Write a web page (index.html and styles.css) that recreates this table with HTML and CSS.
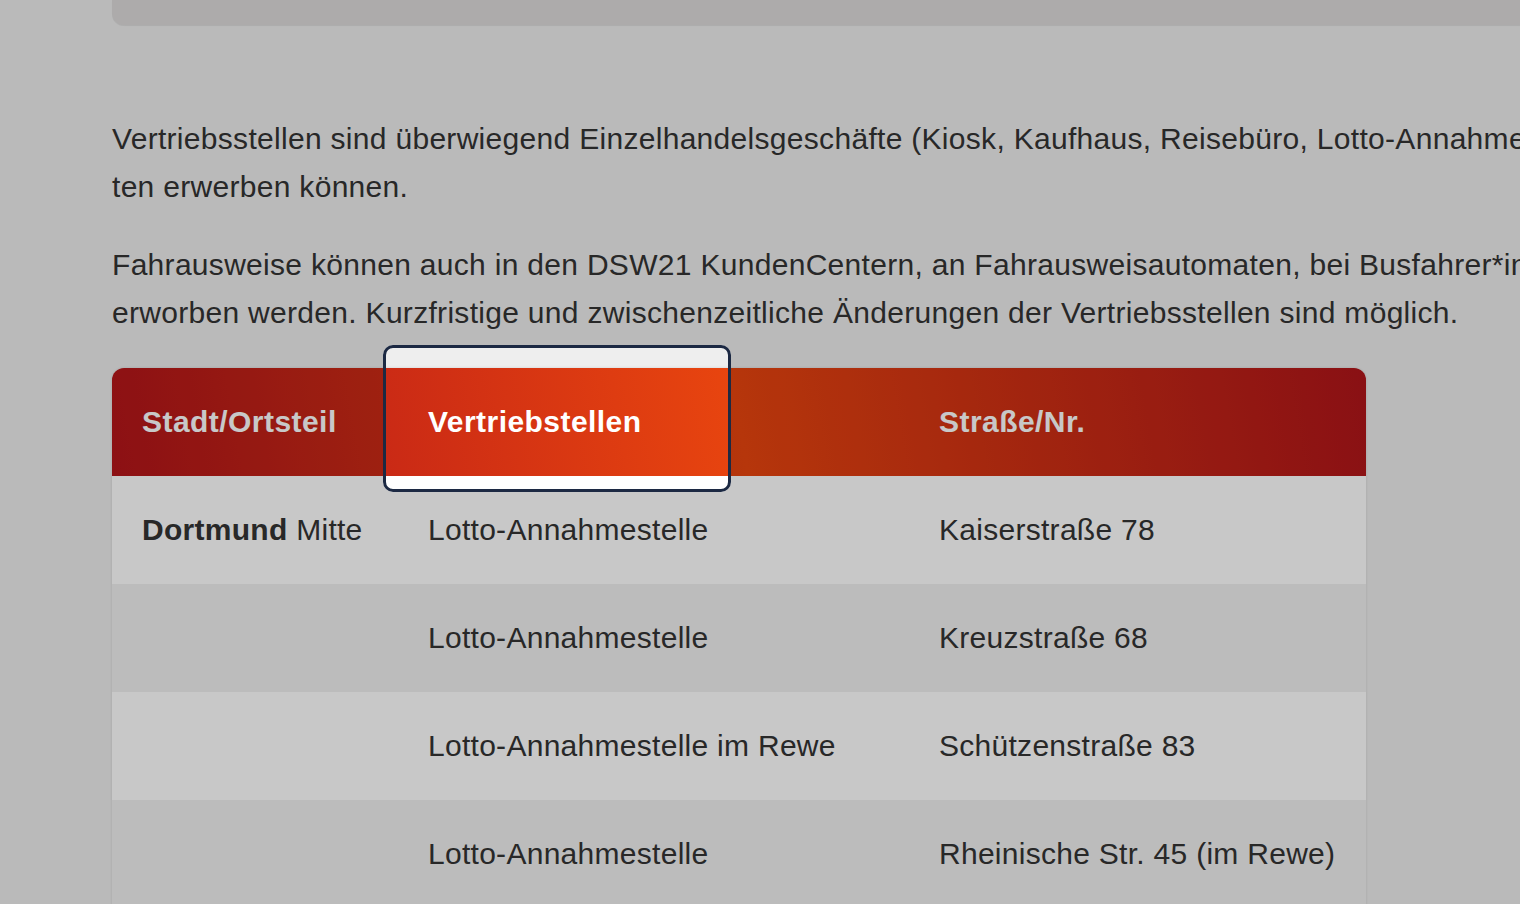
FILE: index.html
```html
<!DOCTYPE html>
<html lang="de">
<head>
<meta charset="utf-8">
<title>Vertriebsstellen</title>
<link rel="stylesheet" href="styles.css">
</head>
<body>
<div class="page">
  <div class="top-card"></div>
  <div class="content">
    <p>Vertriebsstellen sind überwiegend Einzelhandelsgeschäfte (Kiosk, Kaufhaus, Reisebüro, Lotto-Annahmestellen u.&nbsp;a.), in denen Kund*innen Fahrkar-<br>ten erwerben können.</p>
    <p>Fahrausweise können auch in den DSW21 KundenCentern, an Fahrausweisautomaten, bei Busfahrer*innen und online<br>erworben werden. Kurzfristige und zwischenzeitliche Änderungen der Vertriebsstellen sind möglich.</p>
    <div class="table-wrap">
      <div class="table-clip">
        <table class="shops">
          <colgroup>
            <col class="c1"><col class="c2"><col class="c3">
          </colgroup>
          <thead>
            <tr>
              <th>Stadt/Ortsteil</th>
              <th class="active">Vertriebstellen</th>
              <th>Straße/Nr.</th>
            </tr>
          </thead>
          <tbody>
            <tr><td><strong>Dortmund</strong> Mitte</td><td>Lotto-Annahmestelle</td><td>Kaiserstraße 78</td></tr>
            <tr><td></td><td>Lotto-Annahmestelle</td><td>Kreuzstraße 68</td></tr>
            <tr><td></td><td>Lotto-Annahmestelle im Rewe</td><td>Schützenstraße 83</td></tr>
            <tr><td></td><td>Lotto-Annahmestelle</td><td>Rheinische Str. 45 (im Rewe)</td></tr>
          </tbody>
        </table>
      </div>
      <div class="spotlight"></div>
    </div>
  </div>
</div>
</body>
</html>
```

FILE: styles.css
```css
html, body {
  margin: 0;
  padding: 0;
  overflow: hidden;
  height: 100%;
}

body {
  background: #eeeeee;
  font-family: "Liberation Sans", Arial, Helvetica, sans-serif;
  color: #333333;
}

.page {
  width: 2800px;
  padding-left: 112px;
}

.top-card {
  height: 25px;
  background: #dddbdb;
  border-radius: 0 0 0 12px;
  box-shadow: 0 1px 1px rgba(0, 0, 0, 0.08);
}

.content {
  padding-top: 90px;
}

.content p {
  margin: 0 0 30px;
  font-size: 30px;
  line-height: 48px;
  letter-spacing: 0.3px;
  white-space: nowrap;
}

.table-wrap {
  position: relative;
  width: 1254px;
  margin-top: 31px;
}

.table-clip {
  border-radius: 12px 12px 0 0;
  overflow: hidden;
  box-shadow: 0 0 3px rgba(0, 0, 0, 0.12);
}

.shops {
  width: 1254px;
  table-layout: fixed;
  border-collapse: separate;
  border-spacing: 0;
  font-size: 30px;
  letter-spacing: 0.28px;
}

.shops .c1 { width: 286px; }
.shops .c2 { width: 511px; }
.shops .c3 { width: 457px; }

.shops thead tr {
  background: linear-gradient(80deg, #b3151a 0%, #e8450f 50%, #b0151a 100%);
}

.shops th {
  height: 108px;
  padding: 0 30px;
  text-align: left;
  vertical-align: middle;
  color: #ffffff;
  font-weight: bold;
  letter-spacing: 0.45px;
}

.shops td {
  height: 108px;
  padding: 0 30px;
  vertical-align: middle;
  white-space: nowrap;
}

.shops tbody tr:nth-child(odd) td { background: #ffffff; }
.shops tbody tr:nth-child(even) td { background: #f0f0f0; }

.spotlight {
  position: absolute;
  left: 271px;
  top: -23px;
  width: 342px;
  height: 141px;
  border: 3px solid #1c2943;
  border-radius: 10px;
  box-shadow: 0 0 0 4000px rgba(0, 0, 0, 0.215);
  pointer-events: none;
}
```
